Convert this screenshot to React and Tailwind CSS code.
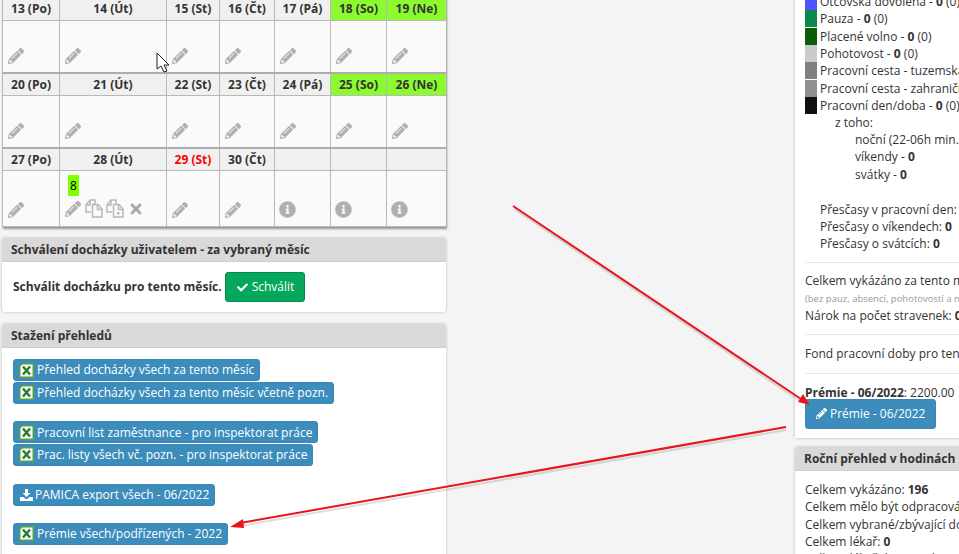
import { FaPencilAlt, FaInfoCircle, FaTimes, FaCheck } from 'react-icons/fa';

const COLS = 'grid grid-cols-[57px_107px_53px_55px_56px_56px_59px]';

const weeks = [
    {
        head: ['13 (Po)', '14 (Út)', '15 (St)', '16 (Čt)', '17 (Pá)', '18 (So)', '19 (Ne)'],
        headHeight: 'h-[22px]',
        bodyHeight: 'h-[51px]',
    },
    {
        head: ['20 (Po)', '21 (Út)', '22 (St)', '23 (Čt)', '24 (Pá)', '25 (So)', '26 (Ne)'],
        headHeight: 'h-[21px]',
        bodyHeight: 'h-[51px]',
    },
    {
        head: ['27 (Po)', '28 (Út)', '29 (St)', '30 (Čt)', '', '', ''],
        headHeight: 'h-[21px]',
        bodyHeight: 'h-[55px]',
    },
];

const legend = [
    ['Otcovská dovolená', 'bg-[#5050ff]'],
    ['Pauza', 'bg-[#08884a]'],
    ['Placené volno', 'bg-[#085f08]'],
    ['Pohotovost', 'bg-[#cbcbcb]'],
    ['Pracovní cesta - tuzemská', 'bg-[#808080]'],
    ['Pracovní cesta - zahraniční', 'bg-[#8f8f8f]'],
    ['Pracovní den/doba', 'bg-[#101010]'],
];

const ExcelIcon = () => (
    <svg width="15" height="15" viewBox="0 0 15 15" className="shrink-0 -ml-[1px]">
        <path d="M3 0 H15 V15 H0 V3 Z" fill="#5f9e45" />
        <path d="M3.5 1.5 H13.5 V13.5 H1.5 V3.5 Z" fill="#f6fbf4" />
        <path d="M4 3.5 L11 11.5 M11 3.5 L4 11.5" stroke="#2b7a33" strokeWidth="2.4" />
    </svg>
);

const DownloadIcon = () => (
    <svg width="13" height="12" viewBox="0 0 13 12" className="shrink-0">
        <path d="M5 0 H8 V4 H10.5 L6.5 8 L2.5 4 H5 Z" fill="#ffffff" />
        <path d="M0 8 H3.5 L5.5 10 H7.5 L9.5 8 H13 V12 H0 Z" fill="#ffffff" />
    </svg>
);

// two overlapping sheets, the front one optionally with a small dot
const SheetsIcon = ({ dot }) => (
    <svg width="18" height="19" viewBox="0 0 18 19" className="shrink-0" fill="none" stroke="#b8b8b8" strokeWidth="1.5">
        <path d="M6 13 H1 V6 L5 1 H10 V5" />
        <path d="M5 1 V6 H1" />
        <path d="M7.5 5.5 H13 L17 10 V18 H7.5 Z" />
        <path d="M12.5 5.5 V10.5 H17" />
        {dot && <rect x="11" y="13" width="2.5" height="2.5" fill="#b8b8b8" stroke="none" />}
    </svg>
);

const DownloadButton = ({ icon, label, gap = 'gap-[3px]' }) => (
    <div>
        <a className={`inline-flex items-center ${gap} h-[22px] pl-[6px] pr-[5px] bg-[#3c8dbc] border border-[#3a87b5] rounded-[3px] text-white whitespace-nowrap`}>
            {icon}
            <span>{label}</span>
        </a>
    </div>
);

const Panel = ({ title, children, className }) => (
    <section className={`bg-white rounded-[3px] shadow-[0_0_3px_rgba(0,0,0,0.25)] ${className}`}>
        <h3 className="h-[24px] pl-[9px] flex items-center bg-[#d9d9d9] border-b border-[#cfcfcf] rounded-t-[3px] font-bold text-[#333] whitespace-nowrap">
            {title}
        </h3>
        {children}
    </section>
);

const DayHead = ({ label, weekend, today, height }) => (
    <div
        className={`${height} flex items-center justify-center border-r last:border-r-0 border-[#b8b8b8] font-bold ${
            weekend ? 'bg-[#8dfa2f]' : 'bg-[#f0f0f0]'
        } ${today ? 'text-[#f00]' : 'text-[#333]'}`}
    >
        {label}
    </div>
);

const DayBody = ({ index, week, height }) => {
    const empty = week === 2 && index > 3;
    const filled = week === 2 && index === 1;
    return (
        <div className={`${height} flex flex-col justify-end pl-[5px] pb-[8px] border-r last:border-r-0 border-[#b8b8b8] bg-[#fafafa]`}>
            {filled && (
                <span className="self-start ml-[3px] mb-[3px] w-[11px] h-[21px] bg-[#80ff00] text-center leading-[21px] text-black">8</span>
            )}
            <div className="flex items-center gap-[4px] text-[#b0b0b0]">
                {empty ? <FaInfoCircle className="text-[17px] -ml-[1px]" /> : <FaPencilAlt className="text-[16px]" />}
                {filled && (
                    <>
                        <SheetsIcon />
                        <span className="-ml-[1px]">
                            <SheetsIcon dot />
                        </span>
                        <FaTimes className="text-[16px] text-[#a8a8a8]" />
                    </>
                )}
            </div>
        </div>
    );
};

const Overlay = () => (
    <svg width="959" height="554" className="absolute left-0 top-0 pointer-events-none">
        <g stroke="#000000" strokeOpacity="0.13" strokeWidth="2" fill="none">
            <path d="M514 209 L800 401" />
            <path d="M786 430 L240 526" />
        </g>
        <path d="M513 206 L801 399" stroke="#e8141c" strokeWidth="2" fill="none" />
        <path d="M810 405 L798 402 L803 394 Z" fill="#e8141c" />
        <path d="M786 427 L240 523" stroke="#e8141c" strokeWidth="2" fill="none" />
        <path d="M230 527 L243 519 L244 528 Z" fill="#e8141c" />
        <path
            d="M157 53 L157 69 L161 66 L164 72 L167 71 L164 65 L169 65 Z"
            fill="#ffffff"
            stroke="#222222"
            strokeWidth="1"
        />
    </svg>
);

const App = () => {
    return (
        <div className="relative h-screen overflow-hidden bg-[#f4f4f4] font-['Open_Sans',sans-serif] text-[12px] leading-[17.14px] text-[#333] flex items-start">
            {/* Left column */}
            <div className="w-[444px] ml-[2px] shrink-0 -mt-[3px]">
                {/* Calendar */}
                <div className="border border-[#b8b8b8] shadow-[1px_2px_2px_rgba(0,0,0,0.4)] bg-[#fafafa]">
                    {weeks.map((week, w) => (
                        <div key={w} className="border-b-2 last:border-b-0 border-[#adadad]">
                            <div className={`${COLS} border-b border-[#b8b8b8]`}>
                                {week.head.map((label, i) => (
                                    <DayHead
                                        key={i}
                                        label={label}
                                        height={week.headHeight}
                                        weekend={i > 4 && w < 2}
                                        today={label === '29 (St)'}
                                    />
                                ))}
                            </div>
                            <div className={COLS}>
                                {week.head.map((_, i) => (
                                    <DayBody key={i} index={i} week={w} height={week.bodyHeight} />
                                ))}
                            </div>
                        </div>
                    ))}
                </div>

                <Panel title="Schválení docházky uživatelem - za vybraný měsíc" className="mt-[11px]">
                    <div className="flex items-center gap-[3px] h-[50px] pl-[11px]">
                        <b className="whitespace-nowrap">Schválit docházku pro tento měsíc.</b>
                        <a className="inline-flex items-center gap-[4px] h-[30px] pl-[11px] pr-[10px] bg-[#04a75b] border border-[#008d4c] rounded-[3px] text-white">
                            <FaCheck className="text-[11px]" />
                            Schválit
                        </a>
                    </div>
                </Panel>

                <Panel title="Stažení přehledů" className="mt-[12px]">
                    <div className="flex flex-col pt-[11px] pb-[11px] pl-[11px]">
                        <DownloadButton icon={<ExcelIcon />} label="Přehled docházky všech za tento měsíc" />
                        <DownloadButton icon={<ExcelIcon />} label="Přehled docházky všech za tento měsíc včetně pozn." />
                        <div className="h-[17px]" />
                        <DownloadButton icon={<ExcelIcon />} label="Pracovní list zaměstnance - pro inspektorat práce" />
                        <DownloadButton icon={<ExcelIcon />} label="Prac. listy všech vč. pozn. - pro inspektorat práce" />
                        <div className="h-[17px]" />
                        <DownloadButton icon={<DownloadIcon />} gap="gap-[2px]" label="PAMICA export všech - 06/2022" />
                        <div className="h-[17px]" />
                        <DownloadButton icon={<ExcelIcon />} label="Prémie všech/podřízených - 2022" />
                    </div>
                </Panel>
            </div>

            {/* Right column */}
            <div className="w-[400px] ml-[349px] shrink-0 -mt-[7px]">
                <section className="bg-white shadow-[0_0_3px_rgba(0,0,0,0.25)] px-[10px] pb-[9px] whitespace-nowrap">
                    {legend.map(([label, swatch]) => (
                        <div key={label} className="flex items-center gap-[3px] h-[17.3px]">
                            <span className={`w-[12px] h-[17px] ${swatch}`} />
                            <span>
                                {label}
                                {label.startsWith('Pracovní cesta') ? '' : (
                                    <>
                                        {' - '}
                                        <b>0</b> (0)
                                    </>
                                )}
                            </span>
                        </div>
                    ))}
                    <div className="pl-[30px]">z toho:</div>
                    <div className="pl-[50px]">noční (22-06h min. 2h) - <b>0</b></div>
                    <div className="pl-[50px]">víkendy - <b>0</b></div>
                    <div className="pl-[50px]">svátky - <b>0</b></div>
                    <div className="h-[18px]" />
                    <div className="pl-[15px]">Přesčasy v pracovní den: <b>0</b></div>
                    <div className="pl-[15px]">Přesčasy o víkendech: <b>0</b></div>
                    <div className="pl-[15px]">Přesčasy o svátcích: <b>0</b></div>
                    <hr className="mt-[10px] mb-[9px] border-[#e8e8e8]" />
                    <div>Celkem vykázáno za tento měsíc: <b>8</b></div>
                    <div className="mt-[1px] text-[9.5px] text-[#999]">(bez pauz, absencí, pohotovostí a návštěv lékaře)</div>
                    <div>Nárok na počet stravenek: <b>0</b></div>
                    <hr className="my-[10px] border-[#e8e8e8]" />
                    <div>Fond pracovní doby pro tento měsíc: <b>168</b></div>
                    <hr className="my-[10px] border-[#e8e8e8]" />
                    <div><b>Prémie - 06/2022</b>: 2200.00</div>
                    <a className="-mt-[2px] inline-flex items-center gap-[3px] h-[30px] px-[10px] bg-[#3c8dbc] border border-[#3a87b5] rounded-[3px] text-white">
                        <FaPencilAlt className="text-[11px]" />
                        Prémie - 06/2022
                    </a>
                </section>

                <Panel title="Roční přehled v hodinách" className="mt-[9px]">
                    <div className="px-[10px] pt-[10px] leading-[17.4px] whitespace-nowrap">
                        <div>Celkem vykázáno: <b>196</b></div>
                        <div>Celkem mělo být odpracováno: <b>1000</b></div>
                        <div>Celkem vybrané/zbývající dovolené: <b>0</b></div>
                        <div>Celkem lékař: <b>0</b></div>
                        <div>Celkem lékař doprovod: <b>0</b></div>
                    </div>
                </Panel>
            </div>

            <Overlay />
        </div>
    );
};

export default App;
